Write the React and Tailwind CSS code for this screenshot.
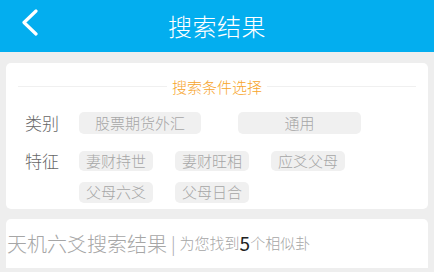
import React from 'react';

const FONT = { fontFamily: '"Noto Sans CJK SC", "Noto Sans", sans-serif' };

const Chip = ({ label, className = '' }) => (
  <div className={`flex items-center justify-center rounded-[5px] bg-[#f0f0f0] text-[15px] font-light text-[#a6a6a6] ${className}`}>
    {label}
  </div>
);

const App = () => {
  return (
    <div className="w-[434px] h-[272px] overflow-hidden bg-[#eeeeee]" style={FONT}>
      {/* Header */}
      <div className="relative flex h-[52px] items-center justify-center bg-[#03aeef]">
        <svg className="absolute left-[21px] top-[9px] w-[18px] h-[27px]" viewBox="0 0 18 27" fill="none">
          <path d="M15 2L3 13.5L15 25" stroke="white" strokeWidth="3.2" strokeLinecap="round" strokeLinejoin="round" />
        </svg>
        <span className="text-[24px] font-light leading-none text-white tracking-[0.5px]">搜索结果</span>
      </div>

      {/* Search conditions */}
      <div className="mx-[6px] mt-[11px] h-[146px] rounded-[5px] bg-white">
        <div className="flex items-center px-[12px] pt-[16px]">
          <div className="h-px flex-1 bg-[#f0f0f0]" />
          <span className="px-[5px] text-[15px] font-light leading-none text-[#f7a42a]">搜索条件选择</span>
          <div className="h-px flex-1 bg-[#f0f0f0]" />
        </div>

        <div className="mt-[18px] flex items-center leading-[22px]">
          <span className="w-[73px] pl-[19px] text-[17px] font-light text-[#666666]">类别</span>
          <Chip label="股票期货外汇" className="h-[22px] w-[122px]" />
          <Chip label="通用" className="ml-[37px] h-[22px] w-[123px]" />
        </div>

        <div className="mt-[17px] flex items-start">
          <span className="w-[73px] pl-[19px] text-[17px] font-light leading-[20px] text-[#666666]">特征</span>
          <div className="grid grid-cols-[74px_74px_74px] gap-x-[22px] gap-y-[11px]">
            <Chip label="妻财持世" className="h-[20px]" />
            <Chip label="妻财旺相" className="h-[20px]" />
            <Chip label="应爻父母" className="h-[20px]" />
            <Chip label="父母六爻" className="h-[21px]" />
            <Chip label="父母日合" className="h-[21px]" />
          </div>
        </div>
      </div>

      {/* Result summary */}
      <div className="mx-[6px] mt-[10px] flex h-[49px] items-center rounded-t-[5px] bg-white pl-[1px] font-light">
        <span className="text-[20px] text-[#a6a6a6]">天机六爻搜索结果</span>
        <span className="mx-[4px] text-[18px] text-[#a6a6a6]">|</span>
        <span className="text-[15px] text-[#a6a6a6]">为您找到</span>
        <span className="text-[19px] font-normal text-[#222222]">5</span>
        <span className="text-[15px] text-[#a6a6a6]">个相似卦</span>
      </div>
    </div>
  );
};

export default App;
